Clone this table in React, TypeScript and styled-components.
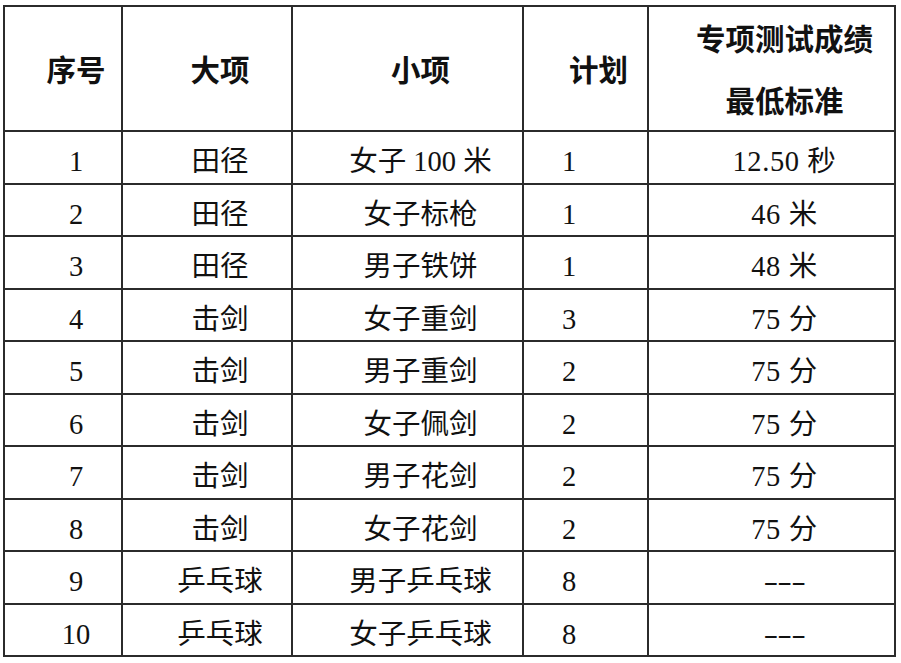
import React from "react";
import styled, { createGlobalStyle } from "styled-components";

const Global = createGlobalStyle`
  html, body { margin: 0; padding: 0; background: #fff; }
  body { font-family: "Liberation Serif", "Noto Sans CJK SC", serif; color: #111; }
`;

const Grid = styled.div`
  margin: 5px 0 0 3px;
  width: 893px;
  box-sizing: border-box;
  display: grid;
  grid-template-columns: 116px 168px 229px 123px 245px;
  grid-template-rows: 123px repeat(10, 50.5px);
  gap: 2px;
  padding: 2px;
  background: #2b2b2b;
`;

const Cell = styled.div<{ $head?: boolean; $plan?: boolean }>`
  background: #fff;
  display: flex;
  flex-direction: column;
  align-items: center;
  justify-content: center;
  box-sizing: border-box;
  padding: ${(p) =>
    p.$head ? "5px 0 0 26px" : p.$plan ? "10px 33px 0 0" : "10px 0 0 26px"};
  font-size: ${(p) => (p.$head ? "29.5px" : "28.5px")};
  font-weight: ${(p) => (p.$head ? 700 : 400)};
  line-height: ${(p) => (p.$head ? "62px" : "1")};
  white-space: nowrap;
`;

const Num = styled.span`
  letter-spacing: 0.6px;
`;

const Dash = styled.span`
  display: inline-block;
  font-size: 26px;
  letter-spacing: -0.5px;
  transform: scaleX(1.7);
`;

const rows: [string, string, string, string, string][] = [
  ["1", "田径", "女子 100 米", "1", "12.50 秒"],
  ["2", "田径", "女子标枪", "1", "46 米"],
  ["3", "田径", "男子铁饼", "1", "48 米"],
  ["4", "击剑", "女子重剑", "3", "75 分"],
  ["5", "击剑", "男子重剑", "2", "75 分"],
  ["6", "击剑", "女子佩剑", "2", "75 分"],
  ["7", "击剑", "男子花剑", "2", "75 分"],
  ["8", "击剑", "女子花剑", "2", "75 分"],
  ["9", "乒乓球", "男子乒乓球", "8", "---"],
  ["10", "乒乓球", "女子乒乓球", "8", "---"],
];

export default function App() {
  return (
    <>
      <Global />
      <Grid>
        <Cell $head>序号</Cell>
        <Cell $head>大项</Cell>
        <Cell $head>小项</Cell>
        <Cell $head>计划</Cell>
        <Cell $head>
          <span>专项测试成绩</span>
          <span>最低标准</span>
        </Cell>
        {rows.map((r) =>
          r.map((v, i) => (
            <Cell key={r[0] + "-" + i} $plan={i === 3}>
              {v === "---" ? <Dash>---</Dash> : i === 4 ? <Num>{v}</Num> : v}
            </Cell>
          ))
        )}
      </Grid>
    </>
  );
}
